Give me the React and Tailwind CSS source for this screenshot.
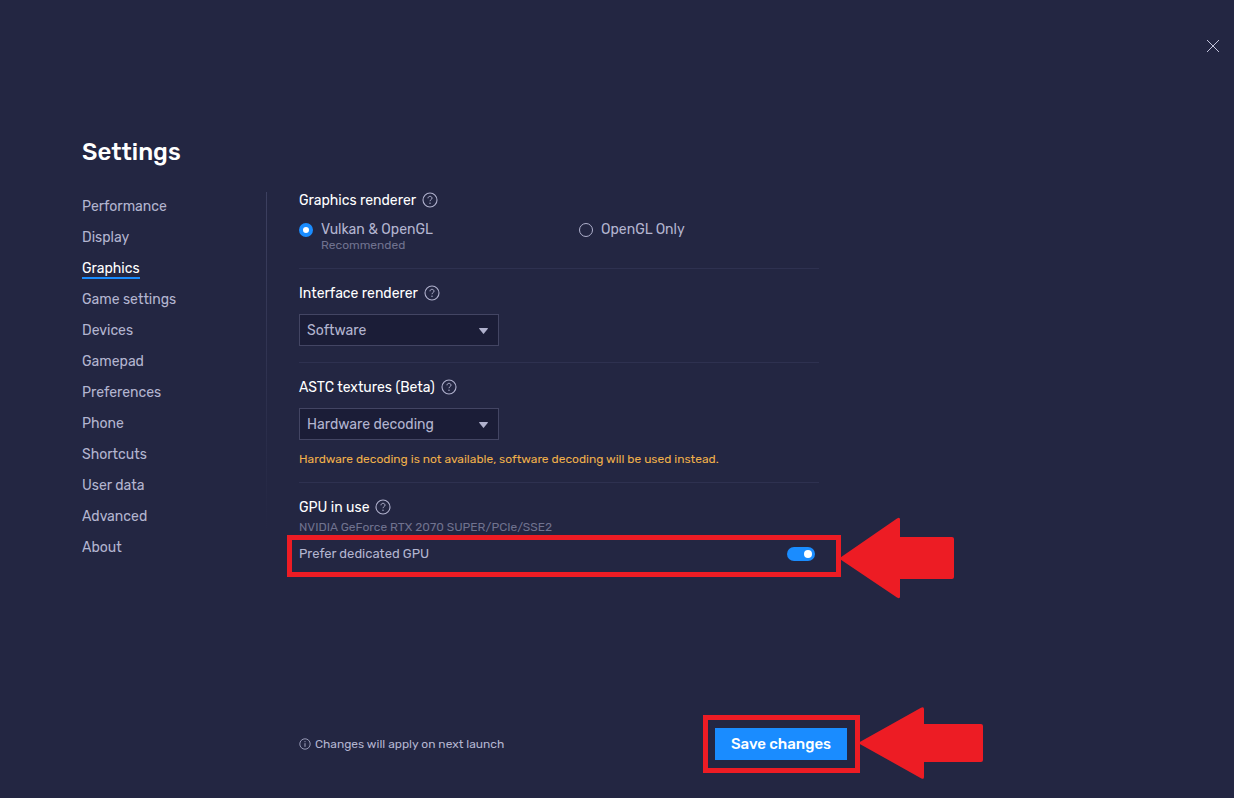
// App.jsx — Settings window, Graphics tab

import { useState } from "react";

const tabs = [
    "Performance",
    "Display",
    "Graphics",
    "Game settings",
    "Devices",
    "Gamepad",
    "Preferences",
    "Phone",
    "Shortcuts",
    "User data",
    "Advanced",
    "About",
];

function HelpButton({ label }) {
    return (
        <button type="button" aria-label={`Help: ${label}`} className="text-[#b0b1cd]">
            <svg width="16" height="16" viewBox="0 0 16 16" fill="none" stroke="currentColor" className="block">
                <circle cx="8" cy="8" r="7" strokeWidth="1.1" />
                <path d="M6 6.3c0-1.2.9-2 2-2s2 .8 2 1.9c0 1.4-2 1.5-2 3" strokeWidth="1" />
                <circle cx="8" cy="11.3" r=".7" fill="currentColor" stroke="none" />
            </svg>
        </button>
    );
}

function SectionTitle({ children }) {
    return (
        <div className="flex h-4 items-center gap-1.5">
            <h2 className="pt-0.5 text-sm leading-4 text-white">{children}</h2>
            <HelpButton label={children} />
        </div>
    );
}

function Section({ title, children }) {
    return (
        <section className="mb-4 border-b border-[#2e3150] pb-4">
            <SectionTitle>{title}</SectionTitle>
            {children}
        </section>
    );
}

function RadioOption({ label, note, ...props }) {
    return (
        <label className="flex flex-1 items-start gap-2">
            <input
                type="radio"
                name="graphics-renderer"
                className="mt-px h-3.5 w-3.5 shrink-0 appearance-none rounded-full border border-[#b0b1cd] checked:border-[4px] checked:border-[#1a8cff] checked:bg-white"
                {...props}
            />
            <span className="text-sm leading-4 text-[#b3b5d0]">
                {label}
                {note && <span className="block text-xs leading-[14px] text-[#70728f]">{note}</span>}
            </span>
        </label>
    );
}

function SelectBox({ label, options }) {
    return (
        <div className="relative mt-[13px] w-[200px]">
            <select
                aria-label={label}
                className="block h-8 w-full appearance-none border border-[#434563] bg-[#1b1d37] px-[7px] pt-0.5 text-sm text-[#b3b5d0]"
            >
                {options.map((option) => (
                    <option key={option}>{option}</option>
                ))}
            </select>
            <svg width="9" height="6" viewBox="0 0 9 6" className="pointer-events-none absolute top-3.5 right-[11px] fill-[#b0b1cd]">
                <path d="M.6 0h7.8q.8 0 .4.7L5 5.6q-.5.6-1 0L.2.7Q-.2 0 .6 0z" />
            </svg>
        </div>
    );
}

export default function App() {
    const [active, setActive] = useState("Graphics");

    return (
        <div className="flex min-h-screen flex-col bg-[#232642] pb-[25px] font-['Rubik','Inter',sans-serif] text-[#b3b5d0]">
            <header className="flex justify-end px-[11px] pt-9">
                <button type="button" aria-label="Close" className="flex h-5 w-5 items-center justify-center text-[#c3c4dc]">
                    <svg width="12" height="12" viewBox="0 0 12 12" fill="none" stroke="currentColor">
                        <path d="M0 0l12 12M12 0L0 12" />
                    </svg>
                </button>
            </header>

            <h1 className="mt-20 pl-[82px] text-2xl font-medium text-white">Settings</h1>

            <div className="mt-6 flex flex-1 pl-[82px]">
                <nav className="flex w-[184px] shrink-0 flex-col items-start gap-3 pt-1.5">
                    {tabs.map((tab) => (
                        <a
                            key={tab}
                            href="#"
                            onClick={() => setActive(tab)}
                            className={`border-b-2 text-sm leading-[17px] ${
                                tab === active ? "border-[#1a8cff] text-white" : "border-transparent"
                            }`}
                        >
                            {tab}
                        </a>
                    ))}
                </nav>
                <div className="h-[340px] w-px shrink-0 bg-linear-to-b from-[#3d4060] to-[#232642]" />

                <main className="flex flex-1 flex-col pl-8">
                    <div className="w-full max-w-[520px]">
                        <Section title="Graphics renderer">
                            <div className="mt-3.5 flex gap-10">
                                <RadioOption label="Vulkan & OpenGL" note="Recommended" defaultChecked />
                                <RadioOption label="OpenGL Only" />
                            </div>
                        </Section>

                        <Section title="Interface renderer">
                            <SelectBox label="Interface renderer" options={["Software", "Auto"]} />
                        </Section>

                        <Section title="ASTC textures (Beta)">
                            <SelectBox
                                label="ASTC textures (Beta)"
                                options={["Hardware decoding", "Software decoding", "Disabled"]}
                            />
                            <p className="mt-3 text-xs leading-[14px] text-[#f0b04a]">
                                Hardware decoding is not available, software decoding will be used instead.
                            </p>
                        </Section>

                        <SectionTitle>GPU in use</SectionTitle>
                        <p className="mt-1 text-xs text-[#70728f]">NVIDIA GeForce RTX 2070 SUPER/PCIe/SSE2</p>

                        {/* Highlighted option */}
                        <div className="relative -mr-[22px] -ml-3 flex items-center justify-between border-[5px] border-[#ed1c24] pt-1.5 pr-[21px] pb-2.5 pl-[7px]">
                            <label htmlFor="dedicated-gpu" className="text-[13px] leading-4">
                                Prefer dedicated GPU
                            </label>
                            <input
                                id="dedicated-gpu"
                                type="checkbox"
                                role="switch"
                                defaultChecked
                                className="flex h-3.5 w-7 appearance-none items-center rounded-full bg-[#5b5e7e] px-[3px] before:h-2 before:w-2 before:rounded-full before:bg-white checked:justify-end checked:bg-[#1a8cff]"
                            />
                            <svg
                                width="118"
                                height="82"
                                viewBox="0 0 118 82"
                                className="absolute -top-[23px] left-full max-w-none fill-[#ed1c24]"
                            >
                                <path d="M3 41.5L61 1.5q3-2 3 1V20h52q2 0 2 2v38q0 2-2 2H64v17.5q0 3-3 1z" />
                            </svg>
                        </div>
                    </div>

                    <footer className="mt-auto flex w-full max-w-[561px] items-center justify-between">
                        <p className="flex items-center gap-1 text-xs">
                            <svg width="12" height="12" viewBox="0 0 12 12" fill="none" stroke="currentColor">
                                <circle cx="6" cy="6" r="5.2" strokeWidth=".8" />
                                <path d="M6 5.2v3.6M6 3.2v1" strokeWidth=".9" />
                            </svg>
                            Changes will apply on next launch
                        </p>
                        <div className="relative border-[5px] border-[#ed1c24] py-2 pr-2 pl-[7px]">
                            <button type="button" className="block h-8 w-[132px] bg-[#1a8cff] text-[15px] font-medium text-white">
                                Save changes
                            </button>
                            <svg
                                width="128"
                                height="72"
                                viewBox="0 0 128 72"
                                className="absolute -top-[13px] left-full max-w-none fill-[#ed1c24]"
                            >
                                <path d="M3 36L66 .8q3-1.6 3 1.4V17h57q2 0 2 2v34q0 2-2 2H69v15q0 3-3 1.2z" />
                            </svg>
                        </div>
                    </footer>
                </main>
            </div>
        </div>
    );
}
